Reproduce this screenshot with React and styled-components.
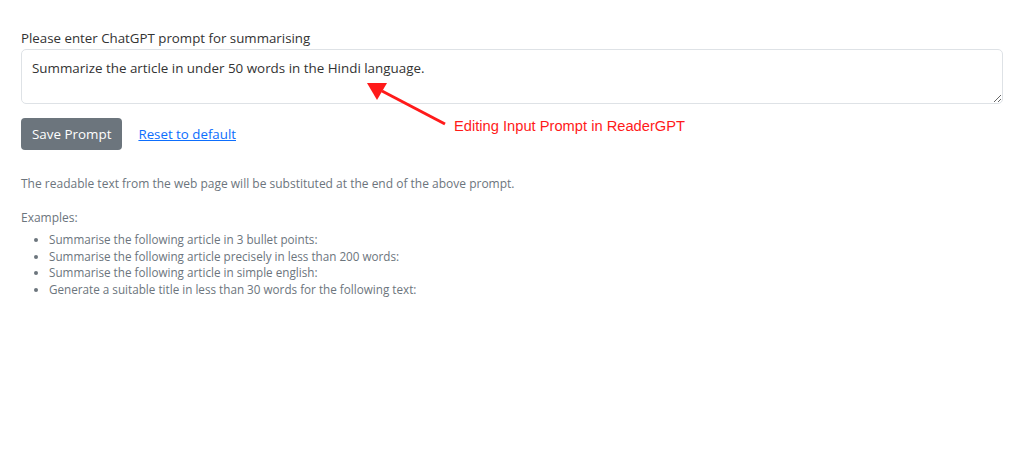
import styled, { createGlobalStyle } from "styled-components";

const GlobalStyle = createGlobalStyle`
  * { box-sizing: border-box; }
  body {
    margin: 0;
    background: #fff;
    font-family: "Open Sans", "Noto Sans", sans-serif;
    color: #212529;
  }
`;

const Page = styled.div`
  position: relative;
  width: 1024px;
  height: 462px;
  padding: 28px 21px 0 21px;
`;

const Label = styled.label`
  display: block;
  font-size: 13.3px;
  line-height: 20px;
  color: #333;
  margin-bottom: 1px;
`;

const PromptBox = styled.textarea`
  display: block;
  width: 982px;
  height: 55px;
  padding: 8px 10px;
  font-family: inherit;
  font-size: 13.4px;
  line-height: 20px;
  color: #333;
  border: 1px solid #dee2e6;
  border-radius: 5px;
  resize: vertical;
  outline: none;
`;

const Actions = styled.div`
  display: flex;
  align-items: center;
  gap: 16px;
  margin-top: 14px;
`;

const Button = styled.button`
  height: 32px;
  padding: 0 11px;
  border: none;
  border-radius: 4px;
  background: #6c757d;
  color: #fff;
  font-family: inherit;
  font-size: 13.4px;
`;

const Link = styled.a`
  color: #0d6efd;
  font-size: 13.3px;
  text-decoration: underline;
`;

const Muted = styled.p`
  margin: ${(p) => p.$gap}px 0 0;
  font-size: 12px;
  line-height: 17px;
  color: #6c757d;
`;

const ExampleList = styled.ul`
  margin: 5px 0 0;
  padding-left: 28px;
  font-size: 11.7px;
  line-height: 16.5px;
  color: #6c757d;
`;

const Callout = styled.div`
  position: absolute;
  left: 454px;
  top: 118px;
  font-family: "Liberation Sans", Arial, sans-serif;
  font-size: 14.7px;
  color: #ff1a1a;
`;

const Arrow = styled.svg`
  position: absolute;
  left: 360px;
  top: 76px;
`;

export default function App() {
  return (
    <>
      <GlobalStyle />
      <Page>
        <Label>Please enter ChatGPT prompt for summarising</Label>
        <PromptBox defaultValue="Summarize the article in under 50 words in the Hindi language." />
        <Actions>
          <Button>Save Prompt</Button>
          <Link href="#">Reset to default</Link>
        </Actions>
        <Muted $gap={25}>The readable text from the web page will be substituted at the end of the above prompt.</Muted>
        <Muted $gap={17}>Examples:</Muted>
        <ExampleList>
          <li>Summarise the following article in 3 bullet points:</li>
          <li>Summarise the following article precisely in less than 200 words:</li>
          <li>Summarise the following article in simple english:</li>
          <li>Generate a suitable title in less than 30 words for the following text:</li>
        </ExampleList>
        <Arrow width="100" height="60" viewBox="0 0 100 60">
          <line x1="85" y1="48" x2="22" y2="15" stroke="#ff1a1a" strokeWidth="3" />
          <polygon points="7,7 27,7 17,24" fill="#ff1a1a" />
        </Arrow>
        <Callout>Editing Input Prompt in ReaderGPT</Callout>
      </Page>
    </>
  );
}
